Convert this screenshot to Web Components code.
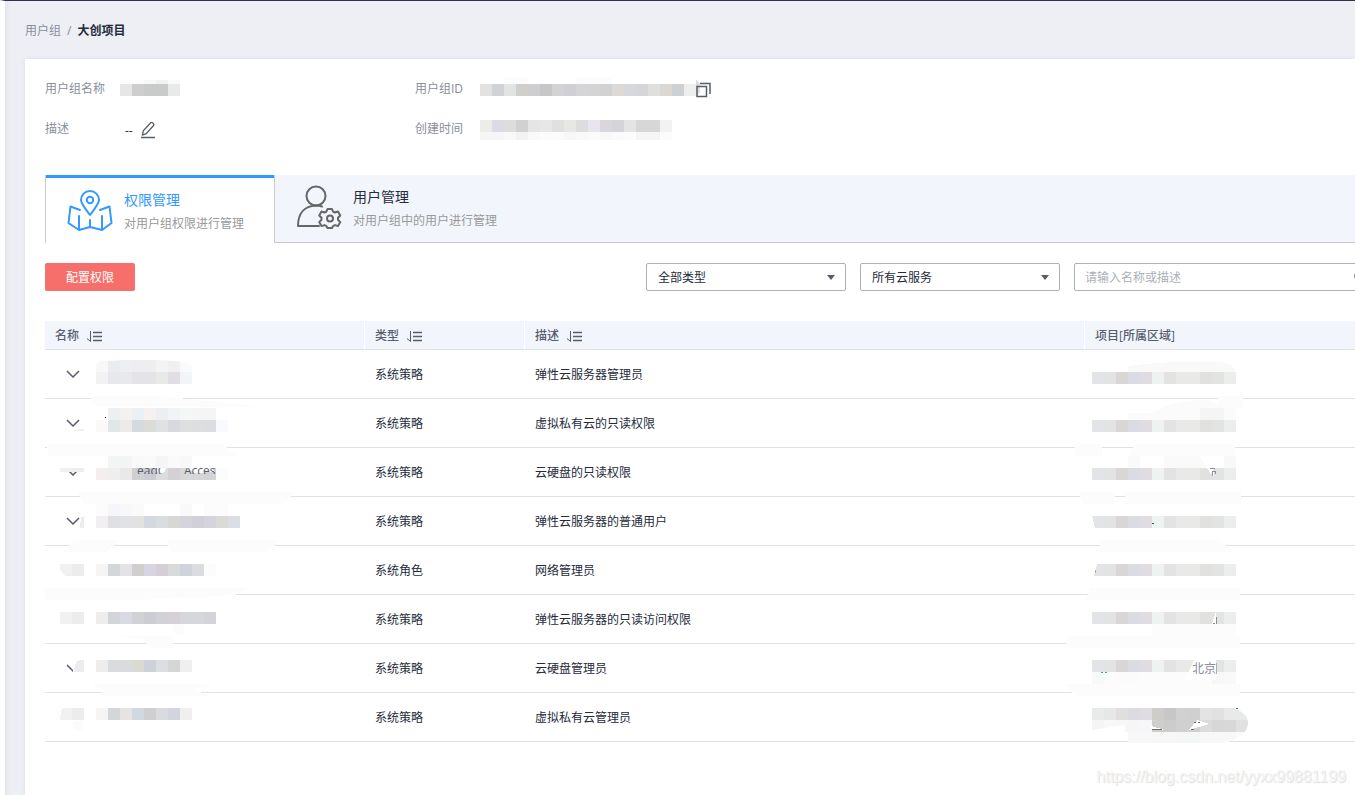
<!DOCTYPE html>
<html lang="zh-CN">
<head>
<meta charset="utf-8">
<meta name="viewport" content="width=device-width, initial-scale=1">
<title>用户组 / 大创项目</title>
<style>
  html { background: #edeff5; }
  body {
    margin: 0;
    font: 12px/20px "Open Sans", "Noto Sans CJK SC", sans-serif;
    color: #252b3a;
    overflow-x: hidden;
  }
</style>
</head>
<body>
<user-group-page></user-group-page>

<script>
const define = (name, html, extra = {}) => {
  const template = document.createElement('template');
  template.innerHTML = html;
  customElements.define(name, class extends HTMLElement {
    constructor() {
      super();
      this.attachShadow({ mode: 'open' }).append(template.content.cloneNode(true));
    }
    connectedCallback() { if (extra.connected) extra.connected.call(this, this.shadowRoot); }
  });
};

/* A run of 12px mosaic cells; "-" leaves a cell empty. */
const strip = (x, y, h, colors) => colors.split(' ').map((c, i) =>
  c === '-' ? '' : `<rect x="${x + i * 12}" y="${y}" width="12" height="${h}" fill="#${c}"/>`).join('');
const smear = (points, fill = '#fcfcfc') => `<polygon points="${points}" fill="${fill}"/>`;
const svg = (w, h, body) => `<svg width="${w}" height="${h}" viewBox="0 0 ${w} ${h}" aria-hidden="true" shape-rendering="crispEdges">${body}</svg>`;

define('crumb-trail', `
  <style>
    :host { display: block; padding: 20px 20px 18px; }
    nav { display: flex; gap: 6px; color: #8a8e99; }
    a { color: inherit; text-decoration: none; }
    b { color: #252b3a; }
  </style>
  <nav aria-label="路径"><a href="#groups"><slot name="parent"></slot></a><span>/</span><b><slot></slot></b></nav>`);

define('info-field', `
  <style>
    :host { display: flex; align-items: center; height: 20px; }
    .label { flex: none; width: var(--label-width, 65px); color: #8a8e99; }
    .value { display: flex; align-items: center; height: 20px; }
  </style>
  <span class="label"><slot name="label"></slot></span><span class="value"><slot></slot></span>`);

const masks = {
  name: [60, 22, strip(0, 2, 4, 'fcfcfc fdfdfd f8f8f8 f1f2f2 f9f9f9') + strip(0, 6, 12, 'e7e6e5 cecece c9caca c9caca e8e9ea')],
  id: [220, 22, '<rect x="24" width="24" y="0" height="6" fill="#fcfcfc"/><rect x="96" width="36" y="0" height="6" fill="#fcfcfc"/>' +
    strip(0, 6, 12, 'e3e2e0 d1d2d6 e1e4e3 d0cfcb cecdcf c9c6c8 d3d2d5 d0d0d4 d5d4d6 d4d3d5 d2d2d3 dcd9d6 d7d8dc d5d6d8 dfdfdd dbd8d3 cdd1d3 eeeeef') +
    '<path d="M216 1l4 5v8l-4 4z" fill="#cfcfd0" opacity=".7"/>'],
  time: [192, 22, strip(0, 2, 12, 'eeece8 dadbe3 dedddd d1d1d2 e5e5e6 e7e7e8 e0dfe2 e9e7e4 dcdedd e8e5ee d9d6dc d3d5d8 e3e5e4 d7d7d7 d7d7d7 f1f3f3') +
    strip(0, 14, 8, 'f6f6f6 f6f6f7 f8f8f8 f2f2f3 f9f9f9 fcfcfc fbfbfb f7f7f7 f9f9f9 fbfbfb f8f8f8 fafafa fcfcfc f5f5f6 f5f5f5 fcfcfc')],
};

define('pixel-mask', `<style>:host { display: block; height: 22px; } svg { display: block; }</style>`, {
  connected(root) {
    const [w, h, body] = masks[this.getAttribute('kind')];
    root.innerHTML += svg(w, h, body);
  }
});

define('icon-button', `
  <style>
    :host { display: block; padding-top: 2px; }
    button { display: block; padding: 0; border: 0; background: none; color: #575d6c; cursor: pointer; }
    ::slotted(svg) { display: block; }
  </style>
  <button type="button"><slot></slot></button>`, {
  connected(root) { root.querySelector('button').setAttribute('aria-label', this.getAttribute('label')); }
});

define('tab-item', `
  <style>
    :host { display: block; flex: 1; background: #f2f5fc; border-bottom: 1px solid #c8cacd; color: #252b3a; }
    :host([active]) { flex: none; width: 228px; background: #fff; border: solid #c8cacd; border-width: 0 1px; color: #3399ff; }
    button { display: flex; gap: 10px; box-sizing: border-box; width: 100%; height: 67px; padding: 8px 20px 0; border: 0;
      background: none; font: inherit; color: inherit; text-align: left; cursor: pointer; }
    :host([active]) button { height: 68px; border-top: 3px solid #3399ff; }
    .title { display: block; font-size: 14px; line-height: 28px; }
    .note { display: block; line-height: 20px; color: #999; }
    ::slotted(svg) { display: block; }
  </style>
  <button type="button" role="tab"><slot name="icon"></slot><span><span class="title"><slot name="title"></slot></span><span class="note"><slot></slot></span></span></button>`, {
  connected(root) { root.querySelector('button').setAttribute('aria-selected', this.hasAttribute('active')); }
});

define('primary-button', `
  <style>
    :host { display: block; }
    button { display: block; width: 90px; height: 28px; padding: 2px 0 0; border: 0; border-radius: 2px; background: #f66f6a; color: #fff; font: inherit; cursor: pointer; }
  </style>
  <button type="button"><slot></slot></button>`);

define('filter-select', `
  <style>
    :host { display: block; position: relative; width: 200px; }
    select { display: block; appearance: none; box-sizing: border-box; width: 100%; height: 28px; padding: 2px 24px 0 11px;
      border: 1px solid #adb0b8; border-radius: 2px; background: #fff; color: #252b3a; font: inherit; }
    svg { position: absolute; right: 10px; top: 12px; pointer-events: none; }
  </style>
  <select></select><svg width="10" height="6" aria-hidden="true"><path d="M1 0h8L5 5z" fill="#575d6c"/></svg>`, {
  connected(root) {
    const select = root.querySelector('select');
    select.setAttribute('aria-label', this.getAttribute('label'));
    select.add(new Option(this.getAttribute('value')));
  }
});

define('search-box', `
  <style>
    :host { display: flex; box-sizing: border-box; width: 300px; height: 28px; border: 1px solid #adb0b8; border-radius: 2px; background: #fff; }
    input { flex: 1; min-width: 0; padding: 2px 0 0 10px; border: 0; outline: 0; background: none; font: inherit; color: #252b3a; }
    input::placeholder { color: #adb0b8; opacity: 1; }
    button { width: 20px; padding: 0; border: 0; background: none; color: #575d6c; }
    svg { display: block; }
  </style>
  <input type="search" aria-label="请输入名称或描述" placeholder="请输入名称或描述">
  <button type="button" aria-label="搜索"><svg width="16" height="16" fill="none" stroke="currentColor" stroke-width="1.500"><circle cx="7" cy="7" r="5"/><path d="M11 11l4 4"/></svg></button>`);

const region = 'e3e4e7 e2e4e4 d8d7d5 dbdbe3 e1dbe2 eef3f1 e3e3e3 e9e9e8 e9e9e7 e1e1df e2e4e2 ebeeed';
const chip = y => strip(15, y, 12, 'f1f1f1 ebecee');
/* Art coordinates are relative to the table cell that holds them. */
const rows = [
  { type: '系统策略', note: '弹性云服务器管理员', open: true,
    name: '<clipPath id="c"><path d="M51 34V16q0-6 12-5q30-3 68 0q16 2 16 8v15z"/></clipPath><g clip-path="url(#c)">' +
      strip(51, 10, 12, 'f8f8f8 ececee edf0f1 eeeef0 eeeeef f3f4f5 f0f0f0 f9fafb') +
      strip(51, 22, 12, 'f3f2f2 e7e8eb e8e9eb e4e3e8 e3e3e8 e9eae8 e0dee4 f3f4f5') + '</g>' +
      smear('45,46 115,46 217,57 51,57'),
    region: '<path d="M43 16Q90 10 136 12q12 2 15 10H43z" fill="#f9f9f8"/>' + strip(7, 22, 12, region) + smear('133,46 158,46 158,58 133,58') },
  { type: '系统策略', note: '虚拟私有云的只读权限', open: true,
    name: '<rect x="60" y="18" width="1" height="1" fill="#252b3a"/>' +
      strip(63, 9, 12, 'eeeff1 f4f2f0 ebf0f4 f4f1f0 eceef1 f2f3f4 f5f6f6 f5f5f5 f5f5f5') +
      strip(51, 21, 12, 'faf9f7 e1e6e8 ecebea d6dadf dbdbd8 dfe1e3 dad8df dddfe0 dddee0 dcdde1 f9fafd') +
      smear('26,31 39,30 39,32 31,32', '#f1f1f1') + smear('2,45 177,45 195,57 3,57'),
    region: '<path d="M43 14h24Q90 0 118 1q14 2 16 8h17v12H43z" fill="#fbfbfb"/>' + strip(115, 9, 12, 'f5f5f5 f5f5f5') + strip(7, 21, 12, region) +
      smear('-10,45 16,45 18,57 -10,57') + smear('50,45 150,45 150,57 44,57') },
  { type: '系统策略', note: '云硬盘的只读权限', open: true,
    name: '<rect x="15" y="14" width="24" height="6" fill="#fff"/>' + strip(15, 20, 4, 'f0f0f0 ededee') +
      strip(63, 8, 12, 'f3f4f4 f3f4f4 f8f9f8 fafafa f4f5f4 fafafa f8f8f8') +
      strip(51, 20, 12, 'f4eeee efeeef e9e9e9 d0d0d2 caccd2 dcdcdc d3d1d6 d8d8d9 d6d6d8 d2d3d6 fbfcfe') +
      smear('108,20 121,20 120,24 115,26', '#fbfbfb') + smear('140,19 166,19 170,24 150,25', '#fbfbfb') +
      '<clipPath id="t"><rect x="92" y="20" width="80" height="6"/></clipPath><g clip-path="url(#t)" fill="#575d6c" font-size="12"><text x="92" y="27">eadC</text><text x="139" y="27">Acces</text></g>' +
      smear('32,44 253,44 235,56 40,56'),
    region: strip(43, 8, 12, 'fafafa - - fafafa fafafa fafafa fafafa - f8f8f8') + strip(7, 20, 12, region) +
      smear('115,8 127,8 129,29 125,25', '#fff') + '<path d="M125 20h5M127 28v-5h3v3" fill="none" stroke="#8a8e99"/>' +
      smear('-6,44 31,44 28,56 -2,56') + smear('41,44 156,44 156,56 39,56') },
  { type: '系统策略', note: '弹性云服务器的普通用户', open: true,
    name: smear('35,31 36,20 39,19 39,31', '#ebecee') + strip(51, 7, 12, 'fcfcfc f5f6f9 f8f8f8 fafafa - - - f9f9f9 - fcfcfc fcfcfc') +
      strip(51, 19, 12, 'f1eff1 e0e0e2 e1e2e5 e1e2e1 d4d8e1 dadddf d7d7d4 d4d4da d1d0d7 d5d3db dadad7 dbdee2') +
      smear('30,43 77,43 60,55 17,55') + smear('122,43 235,43 223,55 125,55'),
    region: strip(7, 19, 12, region) + smear('7,19 7,31 10,31', '#fff') + '<rect x="67" y="26" width="2" height="1" fill="#245a82"/>' + smear('15,43 135,43 148,55 14,55') },
  { type: '系统角色', note: '网络管理员',
    name: chip(18) + smear('15,25 20,30 15,30', '#fff') + strip(51, 18, 12, 'f5f5f5 d3d7da e3e3e5 d0cfcd d7d5e1 d5ced7 d9dada d0d3da dbdce0 fcfcfc') + smear('0,42 203,42 190,49 95,54 0,54'),
    region: strip(7, 18, 12, region) + smear('7,18 12,18 9,30 7,30', '#fff') + '<rect x="10" y="24" width="1" height="3" fill="#d9a066"/>' + smear('5,42 155,42 155,54 1,54') },
  { type: '系统策略', note: '弹性云服务器的只读访问权限',
    name: chip(17) + strip(51, 17, 12, 'eeecec d4d5d9 d8dbe1 d1d2d6 cccdd3 d2d1d6 d6d1d7 d6d7da d6d7da d3d4da') + smear('128,29 139,29 139,39 128,39') + smear('65,41 127,41 129,53 105,53 97,43'),
    region: strip(7, 17, 12, region) + smear('67,29 151,29 151,41 67,41') + smear('129,22 131,17 131,29 127,29', '#fff') + '<path d="M131 22v7M128 28h2" stroke="#8a8e99"/>' + smear('-17,41 155,41 155,53 -20,53') },
  { type: '系统策略', note: '云硬盘管理员', open: true,
    name: '<path d="M28 34V24q2-8 7-8h4v18z" fill="#fff"/><path d="M29 28q1-12 6-12h4v12z" fill="#ebecee"/>' + strip(51, 16, 12, 'eeecec dadbde dadbdc dadad3 ced0da dddee2 d5d6d6 efeff0') + smear('47,40 170,40 150,46 165,52 60,52'),
    region: strip(7, 16, 12, region) + strip(7, 28, 12, 'f8f9f9 fcfcfc fbfbfc fafbfc fcfcfc fcfcfc fcfcfc fcfcfc fcfcfc fcfcfc f7f7f7 f8f9f9') +
      smear('109,16 131,16 131,36 100,36', '#fff') + '<clipPath id="b"><rect x="108" y="14" width="24" height="20"/></clipPath><text clip-path="url(#b)" x="107" y="29" font-size="12" fill="#8a8e99">北京</text><path d="M131 19v11" stroke="#adb0b8"/>' +
      '<path d="M16 28h2M20 28h2" stroke="#4797bd"/>' + smear('-19,40 155,40 155,52 -10,52') },
  { type: '系统策略', note: '虚拟私有云管理员',
    name: chip(15) + smear('15,15 17,15 15,24', '#fff') + strip(51, 15, 12, 'f5f5f5 d3d7da e7e3e2 d0d8e0 cfcfd1 dadbdf d2d5db efeff0') + smear('27,28 38,28 38,38 29,37'),
    region: '<clipPath id="r"><path d="M7 15h141q15 5 15 15q0 13-23 20H40V32L7 37z"/></clipPath><g clip-path="url(#r)">' +
      strip(7, 15, 12, 'e9eaea e6e8e7 e1dfdd dbdbe1 dfdde2 cecdca c7c7c7 d0d1d0 cfd0cf e4e4e4 e1e1e1 e8e9e9 e8e9e9') +
      strip(7, 27, 12, 'f5f5f6 f8f8f8 f7f7f7 f6f6f8 f7f7f9 cfcfce cccccb d0d0d0 cfd0cf dcdcdc d7d7d5 d8d8d8 e0e0e0') +
      strip(43, 39, 12, 'f8f8f8 f8f8f8 f6f7f6 f6f7f6 f5f7f6 f5f7f6 f7f8f7 f7f8f7 f8f8f8 fafafa') + '</g>' +
      smear('63,32 80,37 67,36', '#fff') + smear('112,27 124,31 104,37', '#fff') + '<path d="M67 36h10M106 36h3M109 29h2M113 29h2M151 15h2" stroke="#67696c"/>' },
];

const sortIcon = `<svg width="15" height="13" aria-hidden="true" fill="none" stroke="#575d6c"><path d="M3.500 1v10.500L0 8.500"/><path d="M6 2.500h9M6 6.500h9M6 10.500h9" stroke-width="1.500"/></svg>`;

define('permission-table', `
  <style>
    :host { display: block; }
    table { width: 100%; table-layout: fixed; border-collapse: separate; border-spacing: 0; }
    th, td { box-sizing: border-box; padding: 2px 10px 0; border-bottom: 1px solid #dfe1e6; text-align: left; white-space: nowrap; }
    th { height: 29px; background: #f2f5fc; color: #575d6c; font-weight: 500; border-right: 1px solid #fff; }
    th:last-child { border-right: 0; }
    .head { display: flex; align-items: center; gap: 8px; }
    .head button { padding: 0; border: 0; background: none; }
    .head svg { display: block; }
    td { position: relative; height: 49px; }
    td:first-child { padding-top: 0; }
    .name { width: 320px; } .type { width: 160px; } .note { width: 560px; }
    .toggle { display: block; margin-left: 11px; padding: 0; border: 0; background: none; }
    .toggle svg { display: block; }
    .mask { position: absolute; left: 0; top: 0; overflow: visible; pointer-events: none; }
  </style>
  <table>
    <thead><tr>
      <th class="name"><span class="head">名称<button type="button" aria-label="名称排序">${sortIcon}</button></span></th>
      <th class="type"><span class="head">类型<button type="button" aria-label="类型排序">${sortIcon}</button></span></th>
      <th class="note"><span class="head">描述<button type="button" aria-label="描述排序">${sortIcon}</button></span></th>
      <th>项目[所属区域]</th>
    </tr></thead>
    <tbody></tbody>
  </table>`, {
  connected(root) {
    const art = body => `<svg class="mask" width="150" height="48" shape-rendering="crispEdges">${body}</svg>`;
    root.querySelector('tbody').innerHTML = rows.map(r => `<tr>
      <td>${r.open ? '<button class="toggle" type="button" aria-label="展开"><svg width="14" height="8" fill="none" stroke="#575d6c" stroke-width="1.500"><path d="M1 1l6 6 6-6"/></svg></button>' : ''}${art(r.name)}</td>
      <td>${r.type}</td><td>${r.note}</td><td>${art(r.region)}</td></tr>`).join('');
  }
});

define('user-group-page', `
  <style>
    :host { display: flex; flex-direction: column; box-sizing: border-box; min-height: 100vh; position: relative;
      border-top: 1px solid #30304f; border-left: 5px solid #fff; overflow: hidden;
      background: linear-gradient(90deg, #e4e6ec, #edeff5 6px); }
    main { flex: 1; margin-left: 20px; padding: 20px 0 20px 20px; background: #fff; box-shadow: 0 0 4px #d9dce3; }
    .info { display: grid; grid-template-columns: 370px 1fr; row-gap: 20px; padding-bottom: 36px; }
    .wide { --label-width: 75px; }
    .dash { padding: 4px 7px 0 5px; }
    .tabs { display: flex; }
    .tools { display: flex; gap: 14px; margin: 20px -19px 30px 0; }
    .tools primary-button { margin-right: auto; }
    .copy { margin-left: -4px; }
    .watermark { position: absolute; right: 9px; bottom: 8px; font: 16px/20px "Liberation Sans", sans-serif; color: #f4f4f4;
      text-shadow: 1px 1px 1px #ddd; }
  </style>
  <crumb-trail><span slot="parent">用户组</span>大创项目</crumb-trail>
  <main>
    <section class="info">
      <info-field class="wide"><span slot="label">用户组名称</span><pixel-mask kind="name"></pixel-mask></info-field>
      <info-field><span slot="label">用户组ID</span><pixel-mask kind="id"></pixel-mask>
        <icon-button class="copy" label="复制"><svg width="15" height="16" fill="none" stroke="currentColor" stroke-width="1.500"><path d="M1 4.500h9.500v10H1z"/><path d="M4 1.500h10V12"/></svg></icon-button></info-field>
      <info-field class="wide"><span slot="label">描述</span><span class="dash">--</span>
        <icon-button label="编辑"><svg width="16" height="18" fill="none" stroke="currentColor" stroke-width="1.300"><path d="M2.500 14l.8-4.200 7.400-8.100q.8-.8 1.800.1l1 .9q.9.900.1 1.800L6.200 12.600z"/><path d="M1 16.500h14" stroke-width="1.500"/></svg></icon-button></info-field>
      <info-field><span slot="label">创建时间</span><pixel-mask kind="time"></pixel-mask></info-field>
    </section>
    <div class="tabs" role="tablist">
      <tab-item active>
        <svg slot="icon" width="48" height="52" viewBox="0 0 48 52" fill="none" stroke="#3399ff" stroke-width="2" stroke-linejoin="round" stroke-linecap="round"><path d="M24 29C18 21 15 17.500 15 14a9 9 0 0 1 18 0c0 3.500-3 7-9 15z"/><circle cx="24" cy="14" r="3.200"/><path d="M14 24L4.500 20.500 2.500 37l10.500 7 11-3 12 3 9.500-7-2-16.500L34 24M13 30v14M24 34v7M36 30v14"/></svg>
        <span slot="title">权限管理</span>对用户组权限进行管理
      </tab-item>
      <tab-item>
        <svg slot="icon" width="48" height="52" viewBox="0 0 48 52" fill="none" stroke="#666" stroke-width="2" stroke-linejoin="round" stroke-linecap="round"><circle cx="21" cy="13" r="9.500"/><path d="M24 43H3C3 31 9 23 21 22.500q4 0 6 1"/><path d="M32.500 26h4.500l1 2.500 2 1 3-1 2.300 4-2.300 2.300v2l2.300 2.300-2.300 4-3-1-2 1-1 2h-4.500l-1-2-2-1-3 1-2.300-4 2.300-2.300v-2l-2.300-2.300 2.300-4 3 1 2-1z"/><circle cx="35" cy="35.500" r="3"/></svg>
        <span slot="title">用户管理</span>对用户组中的用户进行管理
      </tab-item>
    </div>
    <div class="tools">
      <primary-button>配置权限</primary-button>
      <filter-select label="类型" value="全部类型"></filter-select>
      <filter-select label="云服务" value="所有云服务"></filter-select>
      <search-box></search-box>
    </div>
    <permission-table></permission-table>
  </main>
  <div class="watermark">https://blog.csdn.net/yyxx99881199</div>`);
</script>
</body>
</html>
